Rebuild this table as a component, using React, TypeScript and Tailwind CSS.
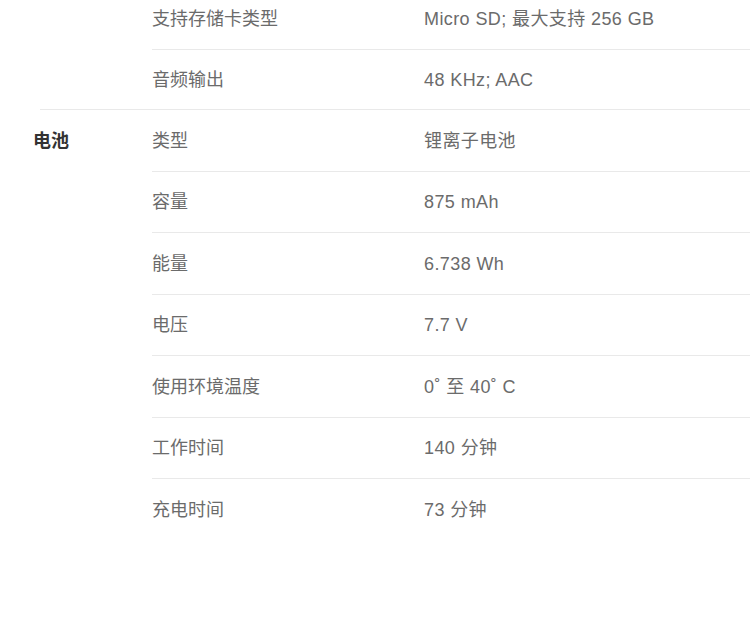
import React from "react";

type Row = { k: string; v: string };

const groups: { title: string; rows: Row[] }[] = [
  {
    title: "",
    rows: [
      { k: "支持存储卡类型", v: "Micro SD; 最大支持 256 GB" },
      { k: "音频输出", v: "48 KHz; AAC" },
    ],
  },
  {
    title: "电池",
    rows: [
      { k: "类型", v: "锂离子电池" },
      { k: "容量", v: "875 mAh" },
      { k: "能量", v: "6.738 Wh" },
      { k: "电压", v: "7.7 V" },
      { k: "使用环境温度", v: "0˚ 至 40˚ C" },
      { k: "工作时间", v: "140 分钟" },
      { k: "充电时间", v: "73 分钟" },
    ],
  },
];

export default function App() {
  return (
    <div
      className="h-[628px] w-[750px] overflow-hidden bg-white text-[18px]"
      style={{ fontFamily: '"Liberation Sans", "Noto Sans CJK SC", sans-serif' }}
    >
      <div className="-mt-[12px]">
        {groups.map((g, gi) => (
          <div key={gi} className={gi > 0 ? "ml-[40px] border-t border-[#e9e9e9]" : "ml-[40px] pb-[-2px]"}>
            <div className="-ml-[7px] flex">
              <div className="flex h-[61.5px] w-[119px] shrink-0 items-center pt-[2px] font-bold text-[#333]">
                {g.title}
              </div>
              <div className="flex-1">
                {g.rows.map((r, ri) => {
                  const last = ri === g.rows.length - 1;
                  return (
                    <div
                      key={ri}
                      className={
                        "flex items-center pt-[2px] text-[#6b6b6b] " +
                        (last ? (gi === 0 ? "h-[59.5px]" : "h-[61.5px]") : "h-[61.5px] border-b border-[#e9e9e9]")
                      }
                    >
                      <div className="w-[272px] shrink-0">{r.k}</div>
                      <div className="tracking-[0.4px]">{r.v}</div>
                    </div>
                  );
                })}
              </div>
            </div>
          </div>
        ))}
      </div>
    </div>
  );
}
